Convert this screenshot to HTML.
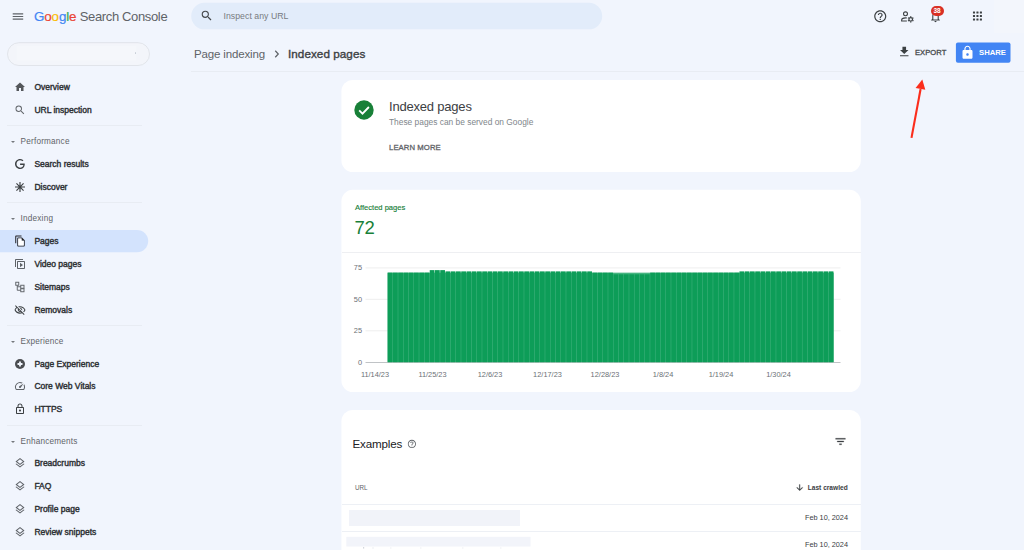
<!DOCTYPE html>
<html lang="en"><head><meta charset="utf-8"><title>Google Search Console</title>
<style>
*{box-sizing:border-box;margin:0;padding:0}
html,body{width:1024px;height:550px;overflow:hidden;background:#f1f5fd;font-family:"Liberation Sans",Arial,sans-serif;color:#202124}
.abs{position:absolute}
#page{position:relative;width:1024px;height:550px;overflow:hidden;background:#f1f5fd}
.sitem{position:absolute;left:0;width:148px;height:22.400px;font-size:8.500px;font-weight:400;color:#2d3033;-webkit-text-stroke:0.400px #2d3033;border-radius:0 11px 11px 0;letter-spacing:0}
.sitem svg{position:absolute;left:14px;top:5.200px}
.sitem span{position:absolute;left:34.400px;top:6px;line-height:10px;white-space:nowrap}
.sitem.act{background:none}
.shead{position:absolute;left:20.600px;font-size:8.200px;line-height:12px;color:#5f6368;white-space:nowrap;letter-spacing:0.2px}
.tri{position:absolute;left:-9.900px;top:5px;width:0;height:0;border-left:2.200px solid transparent;border-right:2.200px solid transparent;border-top:2.600px solid #74787d}
.sep{position:absolute;left:7px;width:135px;height:1px;background:#e8ecf3}
.card{position:absolute;left:342px;width:519px;background:#fff;border-radius:11px}
svg text{font-family:"Liberation Sans",Arial,sans-serif}
</style></head><body><div id="page">

<!-- top bar -->
<svg class="abs" style="left:12px;top:12px" width="12" height="9" viewBox="0 0 12 9"><path d="M0.700 1.900H11.200M0.700 4.500H11.200M0.700 7.100H11.200" stroke="#5f6368" stroke-width="1.200"/></svg>
<div class="abs" id="logo" style="left:34px;top:8px;font-size:13.400px;line-height:17px;white-space:nowrap;letter-spacing:-0.15px;-webkit-text-stroke:0.200px"><span style="color:#4285f4">G</span><span style="color:#ea4335">o</span><span style="color:#fbbc05">o</span><span style="color:#4285f4">g</span><span style="color:#34a853">l</span><span style="color:#ea4335">e</span></div>
<div class="abs" id="logo2" style="left:79.700px;top:8px;font-size:13px;line-height:17px;white-space:nowrap;letter-spacing:-0.35px;color:#5f6368">Search Console</div>
<svg class="abs" style="left:185px;top:0" width="425" height="34" viewBox="185 0 425 34"><rect x="191.200" y="2.800" width="411" height="26.500" rx="13.250" fill="#e2ecfa"/></svg>
<svg class="abs" style="left:200px;top:8.800px" width="13.400" height="13.400" viewBox="0 0 24 24"><path d="M15.5 14h-.79l-.28-.27A6.47 6.47 0 0 0 16 9.5 6.5 6.5 0 1 0 9.5 16c1.61 0 3.09-.59 4.23-1.57l.27.28v.79l5 4.99L20.49 19l-4.99-5zm-6 0C7.01 14 5 11.99 5 9.500S7.01 5 9.5 5 14 7.010 14 9.500 11.990 14 9.500 14z" fill="#44474a"/></svg>
<div class="abs" style="left:223.500px;top:10.800px;font-size:8.700px;line-height:11px;color:#777b80;white-space:nowrap;letter-spacing:0.05px">Inspect any URL</div>

<!-- right icons -->
<svg class="abs" style="left:873px;top:8.800px" width="14.500" height="14.500" viewBox="0 0 24 24"><path d="M11 18h2v-2h-2v2zm1-16C6.480 2 2 6.480 2 12s4.480 10 10 10 10-4.480 10-10S17.520 2 12 2zm0 18c-4.410 0-8-3.590-8-8s3.590-8 8-8 8 3.590 8 8-3.590 8-8 8zm0-14c-2.210 0-4 1.790-4 4h2c0-1.100.9-2 2-2s2 .9 2 2c0 2-3 1.750-3 5h2c0-2.250 3-2.500 3-5 0-2.210-1.790-4-4-4z" fill="#3c4043"/></svg>
<svg class="abs" style="left:900.300px;top:9.600px" width="14.300" height="13.200" viewBox="0 0 26 24"><circle cx="10" cy="7" r="3.600" fill="none" stroke="#3c4043" stroke-width="2"/><path d="M12.500 14.700c-.8-.2-1.600-.3-2.500-.3-3.200 0-7 1.400-7 3.900v1.700h9.500" fill="none" stroke="#3c4043" stroke-width="2"/><circle cx="19.500" cy="17" r="3.300" fill="none" stroke="#3c4043" stroke-width="2.200"/><path d="M19.500 11.300v1.800M19.500 20.900v1.800M14.600 14.200l1.500 .9M22.900 19l1.500 .9M14.600 19.800l1.500-.9M22.900 15l1.500-.9" stroke="#3c4043" stroke-width="2.400"/></svg>
<svg class="abs" style="left:928.600px;top:10px" width="13" height="13.500" viewBox="0 0 24 24"><path d="M12 22c1.100 0 2-.9 2-2h-4c0 1.100.9 2 2 2zm6-6v-5c0-3.070-1.630-5.640-4.500-6.320V4c0-.830-.670-1.500-1.500-1.500s-1.500.670-1.500 1.500v.680C7.640 5.360 6 7.920 6 11v5l-2 2v1h16v-1l-2-2zm-2 1H8v-6c0-2.480 1.510-4.500 4-4.500s4 2.020 4 4.500v6z" fill="#3c4043"/></svg>
<div class="abs" style="left:930.500px;top:5.500px;width:13px;height:10px;border-radius:5px;background:#d93025;color:#fff;font-size:6.500px;line-height:10px;text-align:center;font-weight:700">38</div>
<svg class="abs" style="left:970px;top:8px" width="16" height="16" viewBox="970 8 16 16"><g fill="#3c4043"><rect x="972.95" y="11.45" width="2.100" height="2.100" rx="0.400"/><rect x="976.40" y="11.45" width="2.100" height="2.100" rx="0.400"/><rect x="979.85" y="11.45" width="2.100" height="2.100" rx="0.400"/><rect x="972.95" y="14.95" width="2.100" height="2.100" rx="0.400"/><rect x="976.40" y="14.95" width="2.100" height="2.100" rx="0.400"/><rect x="979.85" y="14.95" width="2.100" height="2.100" rx="0.400"/><rect x="972.95" y="18.45" width="2.100" height="2.100" rx="0.400"/><rect x="976.40" y="18.45" width="2.100" height="2.100" rx="0.400"/><rect x="979.85" y="18.45" width="2.100" height="2.100" rx="0.400"/></g></svg>
<div class="abs" style="left:994px;top:0;width:30px;height:33px;background:#f3f6fc"></div>

<!-- property selector -->
<svg class="abs" style="left:0;top:38px" width="160" height="32" viewBox="0 38 160 32"><rect x="7.500" y="42.700" width="142" height="22.800" rx="11.400" fill="#f3f5fa" stroke="#dfe2e8" stroke-width="0.900"/><rect x="16.700" y="46" width="119.500" height="14.600" fill="#f5f7fb"/></svg>

<div class="abs" style="left:135px;top:52px;width:1px;height:1.500px;background:#c6ccd6;border-radius:1px"></div>

<!-- breadcrumb -->
<div class="abs" style="left:194px;top:46.700px;font-size:11.500px;line-height:15px;color:#5f6368;white-space:nowrap;letter-spacing:-0.15px">Page indexing</div>
<svg class="abs" style="left:269.500px;top:47px" width="14" height="14" viewBox="0 0 24 24"><path d="M9 6.500l5.200 5.500L9 17.500" stroke="#5f6368" stroke-width="2.100" fill="none"/></svg>
<div class="abs" style="left:288px;top:46.100px;font-size:11.700px;line-height:15px;color:#3c4043;white-space:nowrap;font-weight:400;-webkit-text-stroke:0.350px #3c4043;letter-spacing:0.05px" id="bc2">Indexed pages</div>
<div class="abs" style="left:191px;top:71px;width:833px;height:1px;background:#e8ecf3"></div>

<!-- export/share -->
<svg class="abs" style="left:896.700px;top:45.200px" width="14.500" height="13.600" viewBox="0 0 24 24" preserveAspectRatio="none"><path d="M19 9h-4V3H9v6H5l7 7 7-7zM5 18v2h14v-2H5z" fill="#3c4043"/></svg>
<div class="abs" style="left:915px;top:48px;font-size:7.600px;line-height:10px;color:#44474a;font-weight:400;-webkit-text-stroke:0.280px #44474a;letter-spacing:0.05px;white-space:nowrap">EXPORT</div>
<svg class="abs" style="left:950px;top:40px" width="70" height="26" viewBox="950 40 70 26"><rect x="955.900" y="42.400" width="54.600" height="20.400" rx="2" fill="#4285f4"/></svg>
<svg class="abs" style="left:959.500px;top:44.500px" width="15" height="15" viewBox="0 0 24 24"><path d="M18 8h-1V6c0-2.760-2.240-5-5-5S7 3.240 7 6v2H6c-1.100 0-2 .9-2 2v10c0 1.100.9 2 2 2h12c1.100 0 2-.9 2-2V10c0-1.100-.9-2-2-2zm-6 9c-1.100 0-2-.9-2-2s.9-2 2-2 2 .9 2 2-.9 2-2 2zm3.100-9H8.900V6c0-1.710 1.390-3.100 3.100-3.100 1.710 0 3.100 1.390 3.100 3.100v2z" fill="#fff"/></svg>
<div class="abs" style="left:979px;top:48px;font-size:7.700px;line-height:10px;color:#fff;font-weight:700;letter-spacing:0px;white-space:nowrap">SHARE</div>

<!-- red arrow -->
<svg class="abs" style="left:900px;top:74px" width="40" height="70" viewBox="900 74 40 70"><path d="M911.500 137.900L920.600 89" stroke="#fb2d1c" stroke-width="2.100" fill="none"/><path d="M922.300 79.500L915.600 87.900L925.300 89.800Z" fill="#fb2d1c"/></svg>

<!-- sidebar -->
<svg class="abs" style="left:0;top:225px" width="155" height="32" viewBox="0 225 155 32"><rect x="-20" y="229.900" width="168.200" height="22.400" rx="11.200" fill="#d3e3fd"/></svg>
<div class="sitem" style="top:76px"><svg viewBox="0 0 24 24" width="12" height="12"><path d="M10 20v-6h4v6h5v-8h3L12 3 2 12h3v8z" fill="#54575b"/></svg><span>Overview</span></div>
<div class="sitem" style="top:99px"><svg viewBox="0 0 24 24" width="12" height="12"><path d="M15.5 14h-.79l-.28-.27A6.47 6.47 0 0 0 16 9.5 6.5 6.5 0 1 0 9.5 16c1.61 0 3.09-.59 4.23-1.57l.27.28v.79l5 4.99L20.49 19l-4.99-5zm-6 0C7.01 14 5 11.99 5 9.500S7.01 5 9.5 5 14 7.010 14 9.500 11.990 14 9.500 14z" fill="#63676c"/></svg><span>URL inspection</span></div>
<div class="sep" style="top:125.2px"></div>
<div class="shead" style="top:135.7px"><span class="tri"></span>Performance</div>
<div class="sitem" style="top:153px"><svg viewBox="0 0 24 24" width="12" height="12"><path d="M21.35 11.1h-9.17v2.73h6.51c-.33 3.810-3.500 5.440-6.500 5.440C8.360 19.270 5 16.250 5 12c0-4.100 3.200-7.270 7.200-7.270 3.090 0 4.900 1.970 4.900 1.970L19 4.720S16.560 2 12.100 2C6.420 2 2.030 6.800 2.030 12c0 5.050 4.130 10 10.220 10 5.350 0 9.250-3.670 9.250-9.090 0-1.150-.150-1.810-.150-1.810z" fill="#3c4043"/></svg><span>Search results</span></div>
<div class="sitem" style="top:176px"><svg viewBox="0 0 24 24" width="12" height="12"><path d="M12 2v20M2 12h20M4.900 4.900l14.200 14.200M19.100 4.900L4.900 19.100" stroke="#3c4043" stroke-width="2.300" fill="none"/></svg><span>Discover</span></div>
<div class="sep" style="top:202.2px"></div>
<div class="shead" style="top:212.7px"><span class="tri"></span>Indexing</div>
<div class="sitem act" style="top:230px"><svg viewBox="0 0 24 24" width="12" height="12"><path d="M15 1H4.500C3.400 1 2.500 1.900 2.500 3v13.500h2V3H15V1zm1 4H8.500c-1.100 0-2 .9-2 2v14c0 1.100.9 2 2 2h11c1.100 0 2-.9 2-2V10.500L16 5zm3.500 16h-11V7H15v4.500h4.500V21z" fill="#202124"/><path d="M8.500 7H15v4.500h4.500V21h-11z" fill="#fff"/></svg><span>Pages</span></div>
<div class="sitem" style="top:253px"><svg viewBox="0 0 24 24" width="12" height="12"><path transform="translate(0,24) scale(1,-1)" d="M4 6H2v14c0 1.100.9 2 2 2h14v-2H4V6zm16-4H8c-1.100 0-2 .9-2 2v12c0 1.100.9 2 2 2h12c1.100 0 2-.9 2-2V4c0-1.100-.9-2-2-2zm0 14H8V4h12v12zM12 5.500v9l6-4.500z" fill="#5f6368"/></svg><span>Video pages</span></div>
<div class="sitem" style="top:276px"><svg viewBox="0 0 24 24" width="12" height="12"><g fill="none" stroke="#5f6368" stroke-width="1.900"><rect x="3.500" y="2.500" width="6" height="6"/><rect x="13.500" y="8.500" width="6.500" height="6"/><rect x="13.500" y="15.500" width="6.500" height="6"/><path d="M6.500 8.500V18.500H13.500M6.500 11.500H13.500"/></g></svg><span>Sitemaps</span></div>
<div class="sitem" style="top:298.5px"><svg viewBox="0 0 24 24" width="12" height="12"><path d="M12 6.500c3.790 0 7.170 2.130 8.820 5.500-.59 1.220-1.420 2.270-2.410 3.120l1.410 1.410c1.390-1.230 2.490-2.770 3.180-4.530C21.270 7.610 17 4.500 12 4.500c-1.270 0-2.490.2-3.640.57l1.650 1.650c.650-.130 1.310-.220 1.990-.220zm-1.070 1.140L13 9.710c.570.250 1.030.710 1.280 1.280l2.070 2.070c.080-.340.140-.700.140-1.070C16.500 9.510 14.480 7.500 12 7.500c-.370 0-.720.050-1.070.140zM2.010 3.870l2.680 2.680A11.738 11.738 0 0 0 1 12c1.730 4.390 6 7.500 11 7.500 1.520 0 2.980-.290 4.320-.820l3.420 3.420 1.410-1.410L3.420 2.450 2.010 3.870zm7.500 7.500l2.610 2.610c-.040.010-.080.020-.120.020-1.380 0-2.500-1.120-2.500-2.500 0-.050.010-.080.010-.130zm-3.400-3.400l1.750 1.750c-.230.550-.360 1.150-.360 1.780 0 2.480 2.020 4.500 4.500 4.500.630 0 1.230-.130 1.770-.360l.980.980c-.880.240-1.800.380-2.750.380-3.790 0-7.170-2.130-8.820-5.500.700-1.430 1.720-2.610 2.930-3.530z" fill="#3c4043"/></svg><span>Removals</span></div>
<div class="sep" style="top:324.7px"></div>
<div class="shead" style="top:335.7px"><span class="tri"></span>Experience</div>
<div class="sitem" style="top:353px"><svg viewBox="0 0 24 24" width="12" height="12"><circle cx="12" cy="12" r="10" fill="#4a4d51"/><path d="M12 7v10M7 12h10" stroke="#f1f5fd" stroke-width="3.600"/></svg><span>Page Experience</span></div>
<div class="sitem" style="top:375.2px"><svg viewBox="0 0 24 24" width="12" height="12"><path d="M20.380 8.570l-1.230 1.850a8 8 0 0 1-.220 7.580H5.070A8 8 0 0 1 15.580 6.850l1.850-1.230A10 10 0 0 0 3.350 19a2 2 0 0 0 1.720 1h13.850a2 2 0 0 0 1.740-1 10 10 0 0 0-.270-10.440zm-9.790 6.840a2 2 0 0 0 2.830 0l5.660-8.490-8.490 5.660a2 2 0 0 0 0 2.830z" fill="#5f6368"/></svg><span>Core Web Vitals</span></div>
<div class="sitem" style="top:398px"><svg viewBox="0 0 24 24" width="12" height="12"><path d="M18 8h-1V6c0-2.760-2.240-5-5-5S7 3.240 7 6v2H6c-1.100 0-2 .9-2 2v10c0 1.100.9 2 2 2h12c1.100 0 2-.9 2-2V10c0-1.100-.9-2-2-2zM9 6c0-1.660 1.340-3 3-3s3 1.340 3 3v2H9V6zm9 14H6V10h12v10zm-6-3c1.100 0 2-.9 2-2s-.9-2-2-2-2 .9-2 2 .9 2 2 2z" fill="#3c4043"/></svg><span>HTTPS</span></div>
<div class="sep" style="top:424.7px"></div>
<div class="shead" style="top:435.7px"><span class="tri"></span>Enhancements</div>
<div class="sitem" style="top:452.2px"><svg viewBox="0 0 24 24" width="12" height="12"><path d="M12 18.540l-7.370-5.730L3 14.070l9 7 9-7-1.630-1.270L12 18.540zM12 16l7.360-5.730L21 9l-9-7-9 7 1.630 1.270L12 16zm0-11.470L17.740 9 12 13.470 6.260 9 12 4.530z" fill="#5f6368"/></svg><span>Breadcrumbs</span></div>
<div class="sitem" style="top:475px"><svg viewBox="0 0 24 24" width="12" height="12"><path d="M12 18.540l-7.370-5.730L3 14.070l9 7 9-7-1.630-1.270L12 18.540zM12 16l7.360-5.730L21 9l-9-7-9 7 1.630 1.270L12 16zm0-11.470L17.740 9 12 13.470 6.260 9 12 4.530z" fill="#5f6368"/></svg><span>FAQ</span></div>
<div class="sitem" style="top:498px"><svg viewBox="0 0 24 24" width="12" height="12"><path d="M12 18.540l-7.370-5.730L3 14.070l9 7 9-7-1.630-1.270L12 18.540zM12 16l7.360-5.730L21 9l-9-7-9 7 1.630 1.270L12 16zm0-11.470L17.740 9 12 13.470 6.260 9 12 4.530z" fill="#5f6368"/></svg><span>Profile page</span></div>
<div class="sitem" style="top:521px"><svg viewBox="0 0 24 24" width="12" height="12"><path d="M12 18.540l-7.370-5.730L3 14.070l9 7 9-7-1.630-1.270L12 18.540zM12 16l7.360-5.730L21 9l-9-7-9 7 1.630 1.270L12 16zm0-11.470L17.740 9 12 13.470 6.260 9 12 4.530z" fill="#5f6368"/></svg><span>Review snippets</span></div>

<!-- card 1 -->
<svg class="abs" style="left:335px;top:75px" width="535" height="475" viewBox="335 75 535 475"><g fill="#fff"><rect x="341.400" y="80" width="519.400" height="92" rx="11.500"/><rect x="341.400" y="189.800" width="519.400" height="202.200" rx="11.500"/><rect x="341.400" y="410" width="519.400" height="170" rx="11.500"/></g></svg>
<svg class="abs" style="left:354px;top:100px" width="20" height="20" viewBox="0 0 20 20"><circle cx="10" cy="10" r="9.700" fill="#188038"/><path d="M5.200 10.300l3.300 3.300 6.400-6.600" stroke="#fff" stroke-width="1.800" fill="none"/></svg>
<div class="abs" style="left:389px;top:97.500px;font-size:13px;line-height:17px;color:#3c4043;white-space:nowrap;letter-spacing:-0.2px">Indexed pages</div>
<div class="abs" style="left:389px;top:117.400px;font-size:8.400px;line-height:11px;color:#80868b;white-space:nowrap">These pages can be served on Google</div>
<div class="abs" style="left:389px;top:142.500px;font-size:7.700px;line-height:10px;color:#5f6368;white-space:nowrap;font-weight:400;-webkit-text-stroke:0.300px #5f6368;letter-spacing:0.1px">LEARN MORE</div>

<!-- card 2 -->

<div class="abs" style="left:355px;top:203px;font-size:7.550px;line-height:10px;color:#188038;-webkit-text-stroke:0.150px #188038;white-space:nowrap">Affected pages</div>
<div class="abs" style="left:354.500px;top:216.500px;font-size:18.500px;line-height:22px;color:#188038;white-space:nowrap;letter-spacing:-0.3px">72</div>
<div class="abs" style="left:342px;top:252px;width:519px;height:1px;background:#eeeff2"></div>
<svg class="abs" style="left:342px;top:255px" width="519" height="137" viewBox="342 255 519 137">
<g stroke="#ececec" stroke-width="0.900"><path d="M365.500 267.900H840.500M365.500 299.300H840.500M365.500 330.800H840.500"/></g>
<path d="M365.500 362.500H840.500" stroke="#b9bcc0" stroke-width="0.900"/>
<g fill="#0d9d58">
<rect x="387.500" y="272.650" width="446.200" height="89.500" fill="#45b480"/>
<rect x="387.75" y="272.65" width="4.75" height="89.55"/>
<rect x="393.00" y="272.65" width="4.75" height="89.55"/>
<rect x="398.25" y="272.65" width="4.75" height="89.55"/>
<rect x="403.50" y="272.65" width="4.75" height="89.55"/>
<rect x="408.75" y="272.65" width="4.75" height="89.55"/>
<rect x="414.00" y="272.65" width="4.75" height="89.55"/>
<rect x="419.25" y="272.65" width="4.75" height="89.55"/>
<rect x="424.50" y="272.65" width="4.75" height="89.55"/>
<rect x="429.75" y="270.12" width="4.75" height="92.08"/>
<rect x="434.99" y="270.12" width="4.75" height="92.08"/>
<rect x="440.24" y="270.12" width="4.75" height="92.08"/>
<rect x="445.49" y="271.38" width="4.75" height="90.82"/>
<rect x="450.74" y="271.38" width="4.75" height="90.82"/>
<rect x="455.99" y="271.38" width="4.75" height="90.82"/>
<rect x="461.24" y="271.38" width="4.75" height="90.82"/>
<rect x="466.49" y="271.38" width="4.75" height="90.82"/>
<rect x="471.74" y="271.38" width="4.75" height="90.82"/>
<rect x="476.99" y="271.38" width="4.75" height="90.82"/>
<rect x="482.24" y="271.38" width="4.75" height="90.82"/>
<rect x="487.49" y="271.38" width="4.75" height="90.82"/>
<rect x="492.74" y="271.38" width="4.75" height="90.82"/>
<rect x="497.99" y="271.38" width="4.75" height="90.82"/>
<rect x="503.24" y="271.38" width="4.75" height="90.82"/>
<rect x="508.49" y="271.38" width="4.75" height="90.82"/>
<rect x="513.74" y="271.38" width="4.75" height="90.82"/>
<rect x="518.99" y="271.38" width="4.75" height="90.82"/>
<rect x="524.23" y="271.38" width="4.75" height="90.82"/>
<rect x="529.48" y="271.38" width="4.75" height="90.82"/>
<rect x="534.73" y="271.38" width="4.75" height="90.82"/>
<rect x="539.98" y="271.38" width="4.75" height="90.82"/>
<rect x="545.23" y="271.38" width="4.75" height="90.82"/>
<rect x="550.48" y="271.38" width="4.75" height="90.82"/>
<rect x="555.73" y="271.38" width="4.75" height="90.82"/>
<rect x="560.98" y="271.38" width="4.75" height="90.82"/>
<rect x="566.23" y="271.38" width="4.75" height="90.82"/>
<rect x="571.48" y="271.38" width="4.75" height="90.82"/>
<rect x="576.73" y="271.38" width="4.75" height="90.82"/>
<rect x="581.98" y="271.38" width="4.75" height="90.82"/>
<rect x="587.23" y="271.38" width="4.75" height="90.82"/>
<rect x="592.48" y="272.65" width="4.75" height="89.55"/>
<rect x="597.73" y="272.65" width="4.75" height="89.55"/>
<rect x="602.98" y="272.65" width="4.75" height="89.55"/>
<rect x="608.23" y="272.65" width="4.75" height="89.55"/>
<rect x="613.47" y="274.29" width="4.75" height="87.91"/>
<rect x="618.72" y="274.29" width="4.75" height="87.91"/>
<rect x="623.97" y="274.29" width="4.75" height="87.91"/>
<rect x="629.22" y="274.29" width="4.75" height="87.91"/>
<rect x="634.47" y="274.29" width="4.75" height="87.91"/>
<rect x="639.72" y="274.29" width="4.75" height="87.91"/>
<rect x="644.97" y="274.29" width="4.75" height="87.91"/>
<rect x="650.22" y="272.65" width="4.75" height="89.55"/>
<rect x="655.47" y="272.65" width="4.75" height="89.55"/>
<rect x="660.72" y="272.65" width="4.75" height="89.55"/>
<rect x="665.97" y="272.65" width="4.75" height="89.55"/>
<rect x="671.22" y="272.65" width="4.75" height="89.55"/>
<rect x="676.47" y="272.65" width="4.75" height="89.55"/>
<rect x="681.72" y="272.65" width="4.75" height="89.55"/>
<rect x="686.97" y="272.65" width="4.75" height="89.55"/>
<rect x="692.22" y="272.65" width="4.75" height="89.55"/>
<rect x="697.47" y="272.65" width="4.75" height="89.55"/>
<rect x="702.71" y="272.65" width="4.75" height="89.55"/>
<rect x="707.96" y="272.65" width="4.75" height="89.55"/>
<rect x="713.21" y="272.65" width="4.75" height="89.55"/>
<rect x="718.46" y="272.65" width="4.75" height="89.55"/>
<rect x="723.71" y="272.65" width="4.75" height="89.55"/>
<rect x="728.96" y="272.65" width="4.75" height="89.55"/>
<rect x="734.21" y="272.65" width="4.75" height="89.55"/>
<rect x="739.46" y="271.38" width="4.75" height="90.82"/>
<rect x="744.71" y="271.38" width="4.75" height="90.82"/>
<rect x="749.96" y="271.38" width="4.75" height="90.82"/>
<rect x="755.21" y="271.38" width="4.75" height="90.82"/>
<rect x="760.46" y="271.38" width="4.75" height="90.82"/>
<rect x="765.71" y="271.38" width="4.75" height="90.82"/>
<rect x="770.96" y="271.38" width="4.75" height="90.82"/>
<rect x="776.21" y="271.38" width="4.75" height="90.82"/>
<rect x="781.46" y="271.38" width="4.75" height="90.82"/>
<rect x="786.71" y="271.38" width="4.75" height="90.82"/>
<rect x="791.95" y="271.38" width="4.75" height="90.82"/>
<rect x="797.20" y="271.38" width="4.75" height="90.82"/>
<rect x="802.45" y="271.38" width="4.75" height="90.82"/>
<rect x="807.70" y="271.38" width="4.75" height="90.82"/>
<rect x="812.95" y="271.38" width="4.75" height="90.82"/>
<rect x="818.20" y="271.38" width="4.75" height="90.82"/>
<rect x="823.45" y="271.38" width="4.75" height="90.82"/>
<rect x="828.70" y="271.38" width="4.75" height="90.82"/>
</g>
<g font-size="7.400" fill="#6b7075">
<text x="362" y="270.300" text-anchor="end">75</text>
<text x="362" y="301.800" text-anchor="end">50</text>
<text x="362" y="333.300" text-anchor="end">25</text>
<text x="362" y="364.800" text-anchor="end">0</text>
<text x="375" y="376.500" text-anchor="middle">11/14/23</text>
<text x="432.5" y="376.500" text-anchor="middle">11/25/23</text>
<text x="490" y="376.500" text-anchor="middle">12/6/23</text>
<text x="547.5" y="376.500" text-anchor="middle">12/17/23</text>
<text x="605" y="376.500" text-anchor="middle">12/28/23</text>
<text x="663" y="376.500" text-anchor="middle">1/8/24</text>
<text x="721" y="376.500" text-anchor="middle">1/19/24</text>
<text x="778.5" y="376.500" text-anchor="middle">1/30/24</text>
</g>
</svg>

<!-- card 3 -->

<div class="abs" style="left:352.500px;top:435.800px;font-size:11.600px;line-height:15px;color:#202124;white-space:nowrap;letter-spacing:-0.15px">Examples</div>
<svg class="abs" style="left:406.800px;top:438.600px" width="9.800" height="9.800" viewBox="0 0 24 24"><path d="M11 18h2v-2h-2v2zm1-16C6.480 2 2 6.480 2 12s4.480 10 10 10 10-4.480 10-10S17.520 2 12 2zm0 18c-4.410 0-8-3.590-8-8s3.590-8 8-8 8 3.590 8 8-3.590 8-8 8zm0-14c-2.210 0-4 1.790-4 4h2c0-1.100.9-2 2-2s2 .9 2 2c0 2-3 1.750-3 5h2c0-2.250 3-2.500 3-5 0-2.210-1.790-4-4-4z" fill="#5f6368"/></svg>
<svg class="abs" style="left:833.500px;top:434.500px" width="13" height="13" viewBox="0 0 24 24"><path d="M10 18h4v-2h-4v2zM3 6v2h18V6H3zm3 7h12v-2H6v2z" fill="#3c4043" stroke="#3c4043" stroke-width="0.500"/></svg>
<div class="abs" style="left:355px;top:483px;font-size:6.300px;line-height:9px;color:#5f6368;white-space:nowrap">URL</div>
<svg class="abs" style="left:795.400px;top:482.800px" width="9.400" height="9.400" viewBox="0 0 24 24"><path d="M20 12l-1.410-1.410L13 16.170V4h-2v12.170l-5.580-5.590L4 12l8 8 8-8z" fill="#3c4043" stroke="#3c4043" stroke-width="0.600"/></svg>
<div class="abs" style="right:176.300px;top:483px;font-size:6.600px;line-height:9px;color:#3c4043;white-space:nowrap;font-weight:700">Last crawled</div>
<div class="abs" style="left:342px;top:504px;width:519px;height:1px;background:#edf0f5"></div>
<div class="abs" style="left:349px;top:510px;width:171px;height:15.500px;background:#f1f3f9"></div>
<div class="abs" style="right:176px;top:512.500px;font-size:7.300px;line-height:10px;color:#3c4043;white-space:nowrap">Feb 10, 2024</div>
<div class="abs" style="left:342px;top:530.500px;width:519px;height:1px;background:#edf0f5"></div>
<svg class="abs" style="left:340px;top:532px" width="200" height="18" viewBox="340 532 200 18"><rect x="346.300" y="536.800" width="184.200" height="9.700" fill="#f2f4fa"/><g fill="#e9ebf0"><rect x="363" fill="#d5d8de" y="547" width="1.200" height="1.600"/><rect x="372" y="547.600" width="2" height="0.800"/><rect x="390" y="547.600" width="1.500" height="0.800"/><rect x="420" y="547.600" width="1.500" height="0.800"/><rect x="462" y="547.600" width="1.500" height="0.800"/><rect x="500" y="547.600" width="1.500" height="0.800"/></g></svg>
<div class="abs" style="right:176px;top:539.500px;font-size:7.300px;line-height:10px;color:#3c4043;white-space:nowrap">Feb 10, 2024</div>

</div></body></html>
